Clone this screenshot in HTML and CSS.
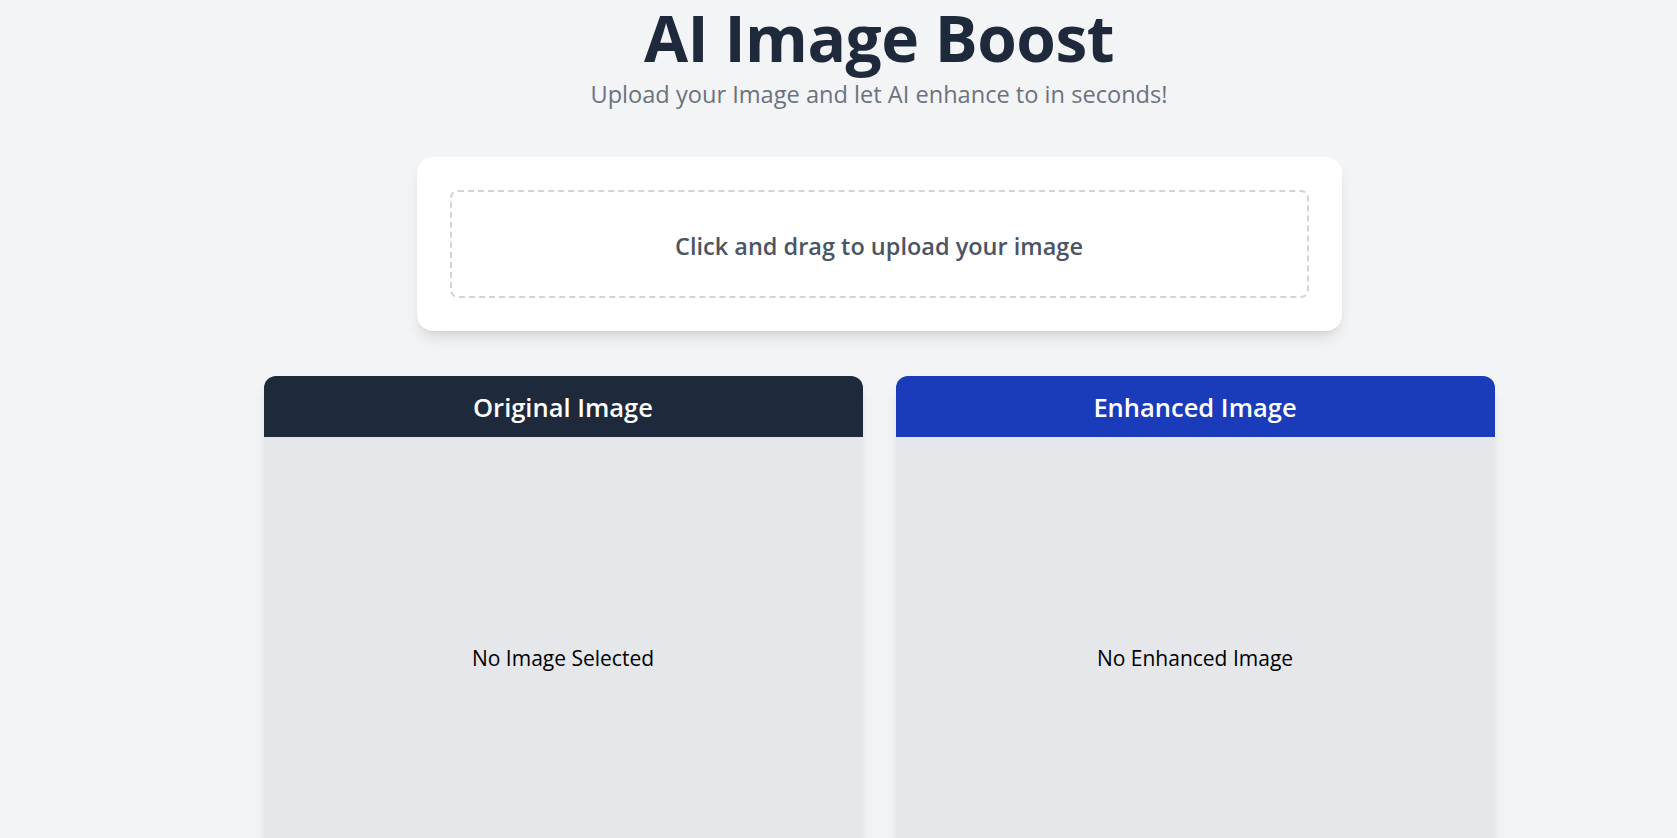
FILE: index.html
```html
<!DOCTYPE html>
<html lang="en">
<head>
<meta charset="utf-8">
<title>AI Image Boost</title>
<link rel="stylesheet" href="styles.css">
</head>
<body>
<main class="page">
  <header class="hero">
    <h1 class="title">AI Image Boost</h1>
    <p class="subtitle">Upload your Image and let AI enhance to in seconds!</p>
  </header>

  <section class="upload-card">
    <label class="dropzone">
      <span class="dropzone-text">Click and drag to upload your image</span>
    </label>
  </section>

  <section class="panels">
    <div class="panel">
      <h2 class="panel-head panel-head-dark">Original Image</h2>
      <div class="panel-body">No Image Selected</div>
    </div>
    <div class="panel">
      <h2 class="panel-head panel-head-blue">Enhanced Image</h2>
      <div class="panel-body">No Enhanced Image</div>
    </div>
  </section>
</main>
</body>
</html>
```

FILE: styles.css
```css
* { box-sizing: border-box; }
html, body { margin: 0; padding: 0; }
body {
  background: #f3f4f6;
  font-family: "Open Sans", "Noto Sans", sans-serif;
  overflow: hidden;
}
.page {
  padding-left: 81px;
  display: flex;
  flex-direction: column;
  align-items: center;
}
.hero {
  display: flex;
  flex-direction: column;
  align-items: center;
}
.title {
  margin: 0;
  padding-top: 2px;
  font-size: 64px;
  line-height: 72px;
  font-weight: 700;
  color: #1e293b;
  letter-spacing: -0.5px;
}
.subtitle {
  margin: 4px 0 0;
  font-size: 23.6px;
  line-height: 32px;
  color: #6b7280;
}
.upload-card {
  margin-top: 47px;
  width: 925px;
  background: #fff;
  border-radius: 16px;
  padding: 33px;
  box-shadow: 0 10px 15px -3px rgba(0,0,0,0.1), 0 4px 6px -4px rgba(0,0,0,0.1);
}
.dropzone {
  display: flex;
  align-items: center;
  justify-content: center;
  height: 108px;
  border: 2px dashed #d1d5db;
  border-radius: 8px;
}
.dropzone-text {
  font-size: 23.5px;
  font-weight: 600;
  color: #4b5563;
  padding-top: 3px;
}
.panels {
  margin-top: 45px;
  display: flex;
  gap: 33px;
}
.panel {
  width: 599px;
  border-radius: 12px;
  overflow: hidden;
  box-shadow: 0 10px 15px -3px rgba(0,0,0,0.1), 0 4px 6px -4px rgba(0,0,0,0.1);
}
.panel-head {
  margin: 0;
  height: 61px;
  display: flex;
  align-items: center;
  justify-content: center;
  font-size: 25.5px;
  font-weight: 600;
  color: #fff;
}
.panel-head-dark { background: #1e293b; }
.panel-head-blue { background: #1a3bba; }
.panel-body {
  height: 442px;
  background: #e5e7eb;
  display: flex;
  align-items: center;
  justify-content: center;
  font-size: 21px;
  color: #000;
}
```
